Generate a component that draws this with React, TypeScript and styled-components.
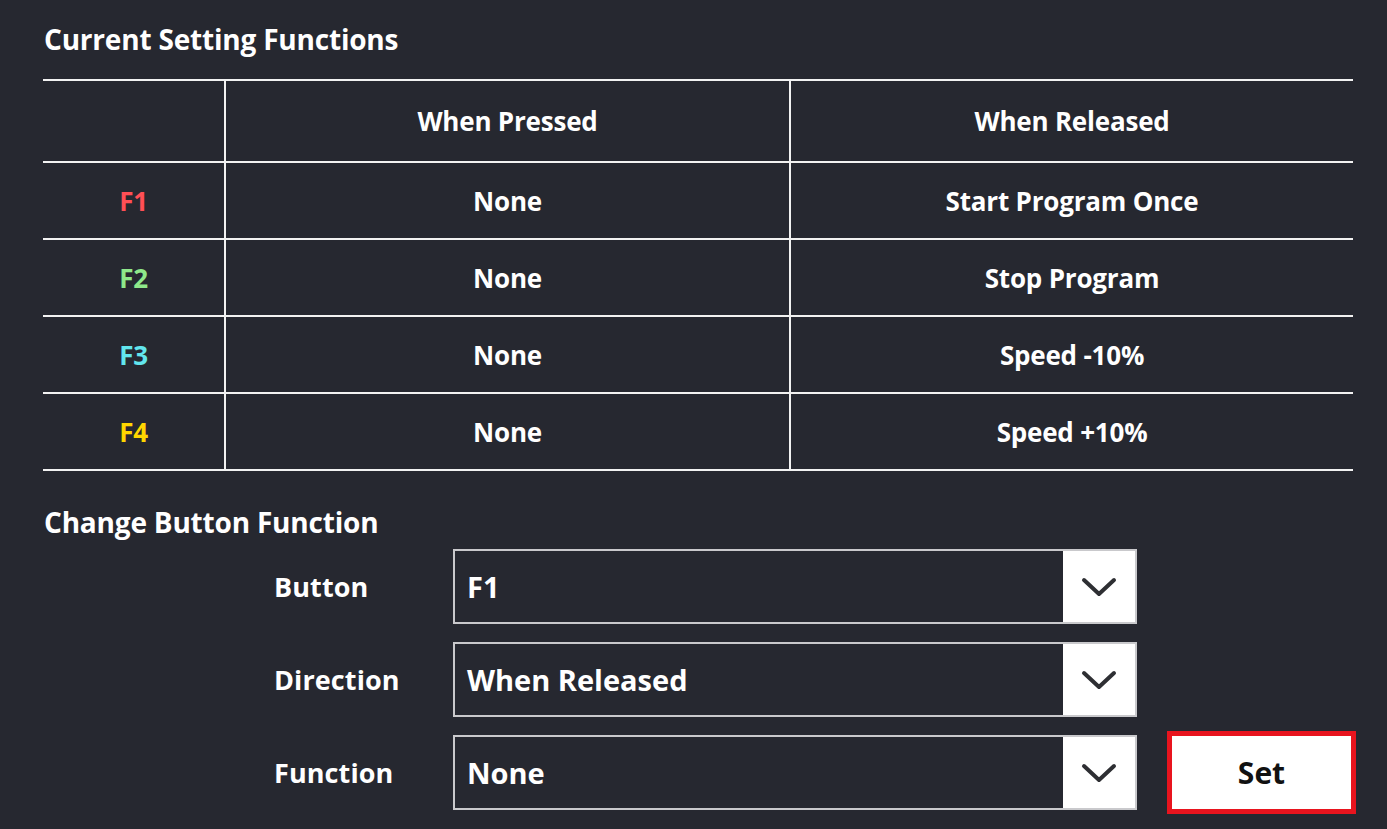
import * as React from 'react';
import styled, { createGlobalStyle } from 'styled-components';

const GlobalStyle = createGlobalStyle`
  html, body {
    margin: 0;
    padding: 0;
    background: #262830;
  }
  body {
    font-family: "Open Sans", "Noto Sans", sans-serif;
    color: #fff;
  }
`;

const Page = styled.div`
  width: 1387px;
  height: 829px;
  box-sizing: border-box;
  padding: 19px 34px 0 43px;
  overflow: hidden;
`;

const SectionTitle = styled.h2<{ $top?: number }>`
  margin: ${p => p.$top ?? 0}px 0 0 1px;
  font-size: 28px;
  line-height: 40px;
  font-weight: 700;
  letter-spacing: -0.2px;
`;

const Table = styled.table`
  width: 1310px;
  margin-top: 20px;
  border-collapse: collapse;
  table-layout: fixed;

  td, th {
    border: 2px solid #f2f2f2;
    text-align: center;
    font-size: 26px;
    font-weight: 700;
    letter-spacing: -0.2px;
    padding: 0;
  }
  td:first-child, th:first-child {
    border-left: none;
  }
  td:last-child, th:last-child {
    border-right: none;
  }
  th {
    height: 80px;
  }
  td {
    height: 75px;
  }
`;

const KeyCell = styled.td<{ $color: string }>`
  color: ${p => p.$color};
`;

const Form = styled.div`
  display: grid;
  grid-template-columns: 149px 684px 189px;
  column-gap: 30px;
  row-gap: 18px;
  align-items: center;
  margin: 7px 0 0 231px;
`;

const Label = styled.div`
  font-size: 27px;
  font-weight: 700;
  letter-spacing: 0.1px;
`;

const Select = styled.div`
  display: flex;
  height: 75px;
  box-sizing: border-box;
  border: 2px solid #c9c9cc;
  background: #262830;
`;

const SelectValue = styled.div`
  flex: 1;
  display: flex;
  align-items: center;
  padding: 0 0 1px 12px;
  font-size: 29px;
  font-weight: 700;
`;

const ArrowBox = styled.div`
  width: 72px;
  background: #fff;
  display: flex;
  align-items: center;
  justify-content: center;
`;

const SetButton = styled.button`
  height: 83px;
  margin: -4px 0;
  box-sizing: border-box;
  border: 5px solid #e8141e;
  background: #fff;
  color: #111;
  font-family: inherit;
  font-size: 30px;
  font-weight: 700;
  cursor: pointer;
`;

const Chevron = () => (
  <svg width="36" height="22" viewBox="0 0 36 22">
    <path d="M3 4 L18 18 L33 4" fill="none" stroke="#2e2f33" strokeWidth="4" strokeLinecap="round" strokeLinejoin="round" />
  </svg>
);

const rows = [
  { key: 'F1', color: '#ff4f55', pressed: 'None', released: 'Start Program Once' },
  { key: 'F2', color: '#8fe88a', pressed: 'None', released: 'Stop Program' },
  { key: 'F3', color: '#62e6ee', pressed: 'None', released: 'Speed -10%' },
  { key: 'F4', color: '#ffd600', pressed: 'None', released: 'Speed +10%' },
];

const SelectField = ({ value }: { value: string }) => (
  <Select>
    <SelectValue>{value}</SelectValue>
    <ArrowBox>
      <Chevron />
    </ArrowBox>
  </Select>
);

export default function App() {
  return (
    <Page>
      <GlobalStyle />
      <SectionTitle>Current Setting Functions</SectionTitle>
      <Table>
        <colgroup>
          <col style={{ width: 182 }} />
          <col style={{ width: 565 }} />
          <col />
        </colgroup>
        <thead>
          <tr>
            <th></th>
            <th>When Pressed</th>
            <th>When Released</th>
          </tr>
        </thead>
        <tbody>
          {rows.map(r => (
            <tr key={r.key}>
              <KeyCell $color={r.color}>{r.key}</KeyCell>
              <td>{r.pressed}</td>
              <td>{r.released}</td>
            </tr>
          ))}
        </tbody>
      </Table>
      <SectionTitle $top={31}>Change Button Function</SectionTitle>
      <Form>
        <Label>Button</Label>
        <SelectField value="F1" />
        <div />
        <Label>Direction</Label>
        <SelectField value="When Released" />
        <div />
        <Label>Function</Label>
        <SelectField value="None" />
        <SetButton>Set</SetButton>
      </Form>
    </Page>
  );
}
